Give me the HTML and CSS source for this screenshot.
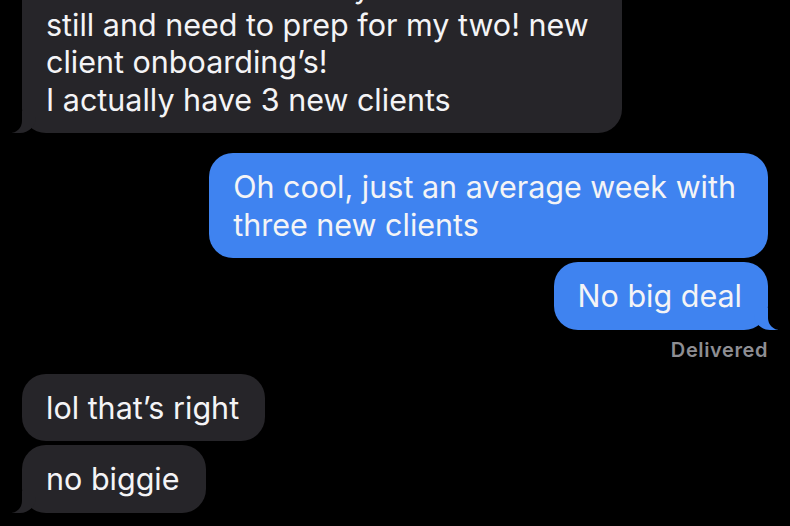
FILE: index.html
```html
<!DOCTYPE html>
<html lang="en">
<head>
    <meta charset="UTF-8">
    <meta name="viewport" content="width=device-width, initial-scale=1.0">
    <title>Messages</title>
    <link rel="stylesheet" href="styles.css">
</head>
<body>

    <div class="thread">
        <div class="bubble received tail">
            I’m at the office all day<br>
            still and need to prep for my two! new client onboarding’s!<br>
            I actually have 3 new clients
        </div>

        <div class="bubble sent first">
            Oh cool, just an average week with<br>
            three new clients
        </div>
        <div class="bubble sent tail">No big deal</div>
        <div class="status">Delivered</div>

        <div class="bubble received">lol that’s right</div>
        <div class="bubble received tail">no biggie</div>
    </div>

</body>
</html>
```

FILE: styles.css
```css
* {
    margin: 0;
    padding: 0;
    box-sizing: border-box;
}

body {
    background-color: #000;
    font-family: 'Inter', 'Noto Sans', sans-serif;
    color: #f4f4f6;
    height: 526px;
    overflow: hidden;
}

.thread {
    display: flex;
    flex-direction: column;
    align-items: flex-start;
    gap: 4px;
    padding: 0 22px;
    margin-top: -47px;
}

.bubble {
    position: relative;
    max-width: 600px;
    padding: 15px 26px 15px 24px;
    border-radius: 24px;
    font-size: 30.5px;
    line-height: 37.5px;
}

.received {
    background: #262529;
}

.sent {
    background: #3f83f0;
    align-self: flex-end;
}

.sent.first {
    margin-top: 16px;
    padding-right: 32px;
}

/* message tails */
.tail::before,
.tail::after {
    content: "";
    position: absolute;
    bottom: 0;
    height: 22px;
}

.received.tail::before {
    left: -10px;
    width: 24px;
    background: #262529;
    border-bottom-right-radius: 16px;
}

.received.tail::after {
    left: -14px;
    width: 14px;
    background: #000;
    border-bottom-right-radius: 12px;
}

.sent.tail::before {
    right: -10px;
    width: 24px;
    background: #3f83f0;
    border-bottom-left-radius: 16px;
}

.sent.tail::after {
    right: -14px;
    width: 14px;
    background: #000;
    border-bottom-left-radius: 12px;
}

.status {
    align-self: flex-end;
    margin: 5px 0 9px;
    font-size: 20px;
    line-height: 22px;
    font-weight: 600;
    letter-spacing: 0.6px;
    color: #8e8e93;
}
```
